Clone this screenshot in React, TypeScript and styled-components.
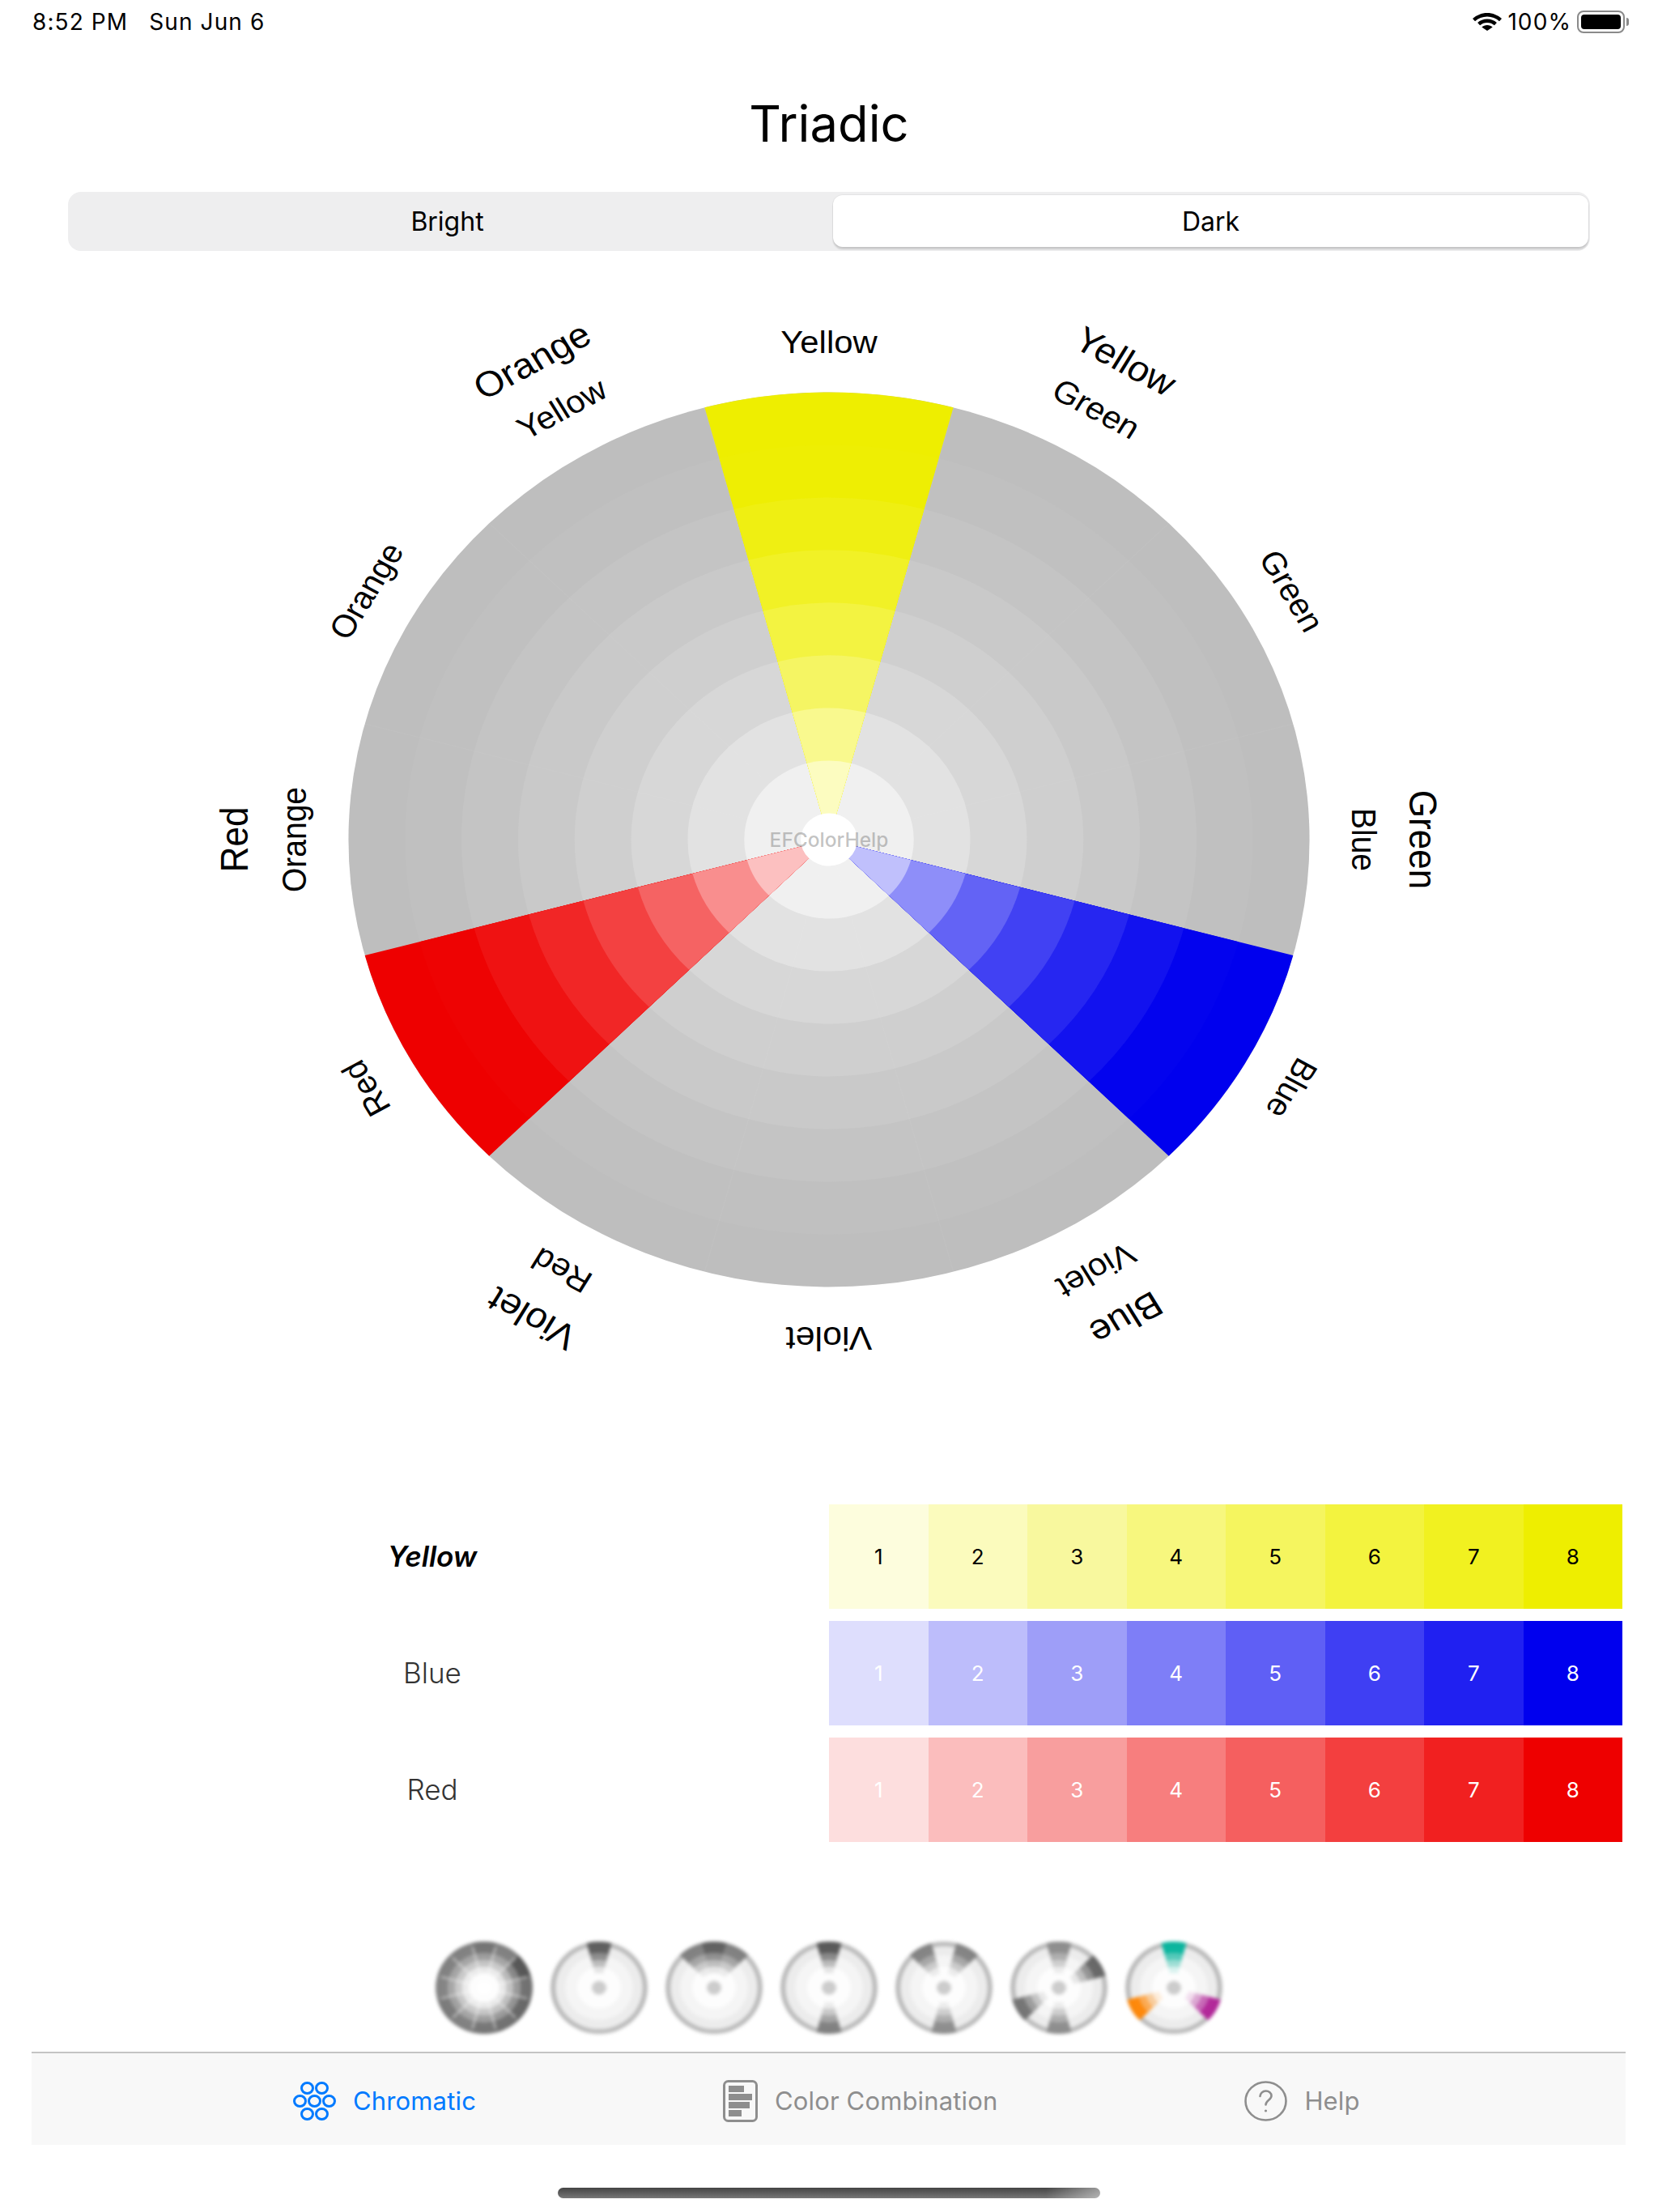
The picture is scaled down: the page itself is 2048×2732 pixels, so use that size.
import React from "react";
import styled, { createGlobalStyle } from "styled-components";

const SX = 1.0743;
const RING_STEP = 65;
const HOLE = 32.5;

const GRAYS = ["#f0f0f0", "#e2e2e2", "#d7d7d7", "#cfcfcf", "#c9c9c9", "#c4c4c4", "#c0c0c0", "#bebebe"];
// how much white is left in a wedge, ring by ring from the middle
const TINTS = [192, 142, 99, 65, 38, 18, 3, 0];
const HIGH = [252, 249, 245, 243, 241, 239, 238, 238];

const wedgeColor = (hue: string, i: number) => {
  const t = TINTS[i];
  const h = HIGH[i];
  if (hue === "yellow") return `rgb(${h},${h},${t})`;
  if (hue === "blue") return `rgb(${t},${t},${h})`;
  return `rgb(${h},${t},${t})`;
};

const point = (r: number, deg: number) => {
  const a = (deg * Math.PI) / 180;
  return `${(r * Math.sin(a)).toFixed(2)} ${(-r * Math.cos(a)).toFixed(2)}`;
};

const pie = (r: number, deg: number, half = 15) =>
  `M0 0L${point(r, deg - half)}A${r} ${r} 0 0 1 ${point(r, deg + half)}Z`;

const band = (ri: number, ro: number, deg: number, half = 15) =>
  `M${point(ro, deg - half)}A${ro} ${ro} 0 0 1 ${point(ro, deg + half)}L${point(ri, deg + half)}A${ri} ${ri} 0 0 0 ${point(ri, deg - half)}Z`;

const SEAM_ANGLES = [15, 45, 75, 105, 135, 165, 195, 225, 255, 285, 315, 345];

const WHEEL_LABELS = [
  { text: "Yellow", deg: 0, r: 601, size: 39 },
  { text: "Yellow", deg: 30, r: 667, size: 44 },
  { text: "Green", deg: 30, r: 601, size: 39 },
  { text: "Green", deg: 60, r: 601, size: 39 },
  { text: "Green", deg: 90, r: 667, size: 44 },
  { text: "Blue", deg: 90, r: 601, size: 39 },
  { text: "Blue", deg: 120, r: 601, size: 39 },
  { text: "Blue", deg: 150, r: 668, size: 44 },
  { text: "Violet", deg: 150, r: 601, size: 39 },
  { text: "Violet", deg: 180, r: 602, size: 40 },
  { text: "Violet", deg: 210, r: 668, size: 44 },
  { text: "Red", deg: 210, r: 601, size: 39 },
  { text: "Red", deg: 240, r: 601, size: 39 },
  { text: "Red", deg: 270, r: 668, size: 44 },
  { text: "Orange", deg: 270, r: 601, size: 39 },
  { text: "Orange", deg: 300, r: 601, size: 39 },
  { text: "Orange", deg: 330, r: 668, size: 44 },
  { text: "Yellow", deg: 330, r: 601, size: 39 },
];

const ROWS = [
  { name: "Yellow", active: true, colors: ["#fdfddd", "#fbfbbd", "#f8f89e", "#f7f77e", "#f5f55f", "#f3f33f", "#f1f120", "#eeee00"] },
  { name: "Blue", active: false, colors: ["#dedefd", "#bdbdfb", "#9e9ef8", "#7e7ef7", "#5f5ff5", "#3f3ff3", "#2020f1", "#0000ee"] },
  { name: "Red", active: false, colors: ["#fddede", "#fbbdbd", "#f89e9e", "#f77e7e", "#f55f5f", "#f33f3f", "#f12020", "#ee0000"] },
];

type MiniWedge = { deg: number; color: string };

const FULL_SHADES = ["#707070", "#7c7c7c", "#505050", "#6c6c6c", "#626262", "#6c6c6c", "#727272", "#7c7c7c", "#767676", "#808080", "#7c7c7c", "#7c7c7c"];

const MINI_WHEELS: MiniWedge[][] = [
  FULL_SHADES.map((color, i) => ({ deg: i * 30, color })),
  [{ deg: 0, color: "#585858" }],
  [
    { deg: -30, color: "#7c7c7c" },
    { deg: 0, color: "#5c5c5c" },
    { deg: 30, color: "#7c7c7c" },
  ],
  [
    { deg: 0, color: "#525252" },
    { deg: 180, color: "#7c7c7c" },
  ],
  [
    { deg: -30, color: "#808080" },
    { deg: 30, color: "#808080" },
    { deg: 180, color: "#8a8a8a" },
  ],
  [
    { deg: 0, color: "#8a8a8a" },
    { deg: 60, color: "#626262" },
    { deg: 180, color: "#8a8a8a" },
    { deg: 240, color: "#707070" },
  ],
  [
    { deg: 0, color: "#00b39b" },
    { deg: 120, color: "#b01f96" },
    { deg: 240, color: "#ff8400" },
  ],
];

const MINI_TIERS = [
  { ri: 0.32, ro: 0.46, alpha: 0.14 },
  { ri: 0.46, ro: 0.6, alpha: 0.36 },
  { ri: 0.6, ro: 0.75, alpha: 0.66 },
  { ri: 0.75, ro: 1, alpha: 0.95 },
];

const MiniWheel: React.FC<{ wedges: MiniWedge[] }> = ({ wedges }) => {
  const R = 57;
  const full = wedges.length > 6;
  return (
    <MiniSvg viewBox="-60 -57 120 114">
      <g transform="scale(1.05 1)">
        <circle r={R} fill="#bababa" />
        <circle r={R * 0.9} fill="#ececec" />
        <circle r={R * 0.7} fill="#f5f5f5" />
        <circle r={R * 0.45} fill="#fdfdfd" />
        {wedges.map((w) =>
          MINI_TIERS.map((t) => (
            <path
              key={`${w.deg}-${t.ri}`}
              d={band(R * t.ri, R * t.ro, w.deg)}
              fill={w.color}
              fillOpacity={t.alpha}
            />
          )),
        )}
        {full &&
          SEAM_ANGLES.map((deg) => (
            <path
              key={deg}
              d={`M${point(R * 0.3, deg)}L${point(R * 0.92, deg)}`}
              stroke="#fff"
              strokeOpacity={0.5}
              strokeWidth={2}
            />
          ))}
        <circle r={R * 0.15} fill={full ? "#ffffff" : "#cccccc"} />
      </g>
    </MiniSvg>
  );
};

const ColorWheel: React.FC = () => {
  const rings = [7, 6, 5, 4, 3, 2, 1, 0];
  const radius = (i: number) => HOLE + RING_STEP * (i + 1);
  const outer = radius(7);
  return (
    <WheelSvg viewBox="0 0 1568 1330">
      <g transform={`translate(784 667) scale(${SX} 1)`}>
        {rings.map((i) => (
          <circle key={i} r={radius(i)} fill={GRAYS[i]} />
        ))}
        {SEAM_ANGLES.map((deg) => (
          <path key={deg} d={`M${point(HOLE, deg)}L${point(outer, deg)}`} stroke="#fff" strokeOpacity={0.035} strokeWidth={1.5} />
        ))}
        {["yellow", "blue", "red"].map((hue, n) =>
          rings.map((i) => <path key={`${hue}${i}`} d={pie(radius(i), n * 120)} fill={wedgeColor(hue, i)} />),
        )}
        <circle r={HOLE} fill="#ffffff" />
        {WHEEL_LABELS.map((l) => (
          <WheelLabel key={`${l.text}${l.deg}`} transform={`rotate(${l.deg}) translate(0 ${-l.r})`} fontSize={l.size}>
            {l.text}
          </WheelLabel>
        ))}
      </g>
      <Watermark x={784} y={676}>
        EFColorHelp
      </Watermark>
    </WheelSvg>
  );
};

const ChromaticIcon = () => (
  <svg width="53" height="48" viewBox="0 0 53 48" fill="none" stroke="#007aff" strokeWidth="3">
    {[
      [17.5, 8],
      [35.5, 8],
      [8.5, 24],
      [26.5, 24],
      [44.5, 24],
      [17.5, 40],
      [35.5, 40],
    ].map(([x, y]) => (
      <ellipse key={`${x}-${y}`} cx={x} cy={y} rx="7" ry="6.4" />
    ))}
  </svg>
);

const CombinationIcon = () => (
  <svg width="43" height="52" viewBox="0 0 43 52" fill="#8e8e8e">
    <rect x="1.5" y="1.5" width="40" height="49" rx="5" fill="none" stroke="#8e8e8e" strokeWidth="3" />
    <rect x="7" y="7" width="19" height="8" />
    <rect x="7" y="17" width="29" height="8" />
    <rect x="7" y="27" width="26" height="8" />
    <rect x="7" y="37" width="16" height="8" />
  </svg>
);

const HelpIcon = () => (
  <svg width="53" height="50" viewBox="0 0 53 50" fill="none" stroke="#8e8e8e" strokeWidth="2.6" strokeLinecap="round">
    <ellipse cx="26.5" cy="25" rx="25" ry="23.5" />
    <path d="M19.5 19a7 7 0 0 1 7-6.5c4 0 7 2.8 7 6 0 5-7 5.5-7 11" />
    <circle cx="26.5" cy="37" r="1.6" fill="#8e8e8e" stroke="none" />
  </svg>
);

const WifiIcon = () => (
  <svg width="36" height="22" viewBox="0 0 36 22" fill="#000">
    <path d="M18 0C11 0 5 2.7 0 7l3 3.2C7 6.6 12.2 4.5 18 4.5s11 2.1 15 5.7L36 7C31 2.7 25 0 18 0z" />
    <path d="M18 7.6c-4.6 0-8.7 1.7-11.9 4.5l3 3.2c2.4-2.1 5.5-3.3 8.9-3.3s6.5 1.2 8.9 3.3l3-3.2C26.7 9.3 22.6 7.6 18 7.6z" />
    <path d="M18 15c-2.6 0-4.9 1-6.7 2.5L18 22l6.7-4.5C22.9 16 20.6 15 18 15z" />
  </svg>
);

const App: React.FC = () => (
  <Page>
    <GlobalStyle />
    <StatusBar>
      <StatusGroup>
        <StatusText>8:52 PM</StatusText>
        <StatusText>Sun Jun 6</StatusText>
      </StatusGroup>
      <StatusRight>
        <WifiIcon />
        <StatusText>100%</StatusText>
        <Battery>
          <BatteryFill />
        </Battery>
      </StatusRight>
    </StatusBar>

    <TitleBar>Triadic</TitleBar>

    <Segmented>
      <Segment>Bright</Segment>
      <Segment $selected>Dark</Segment>
    </Segmented>

    <WheelArea>
      <ColorWheel />
    </WheelArea>

    <Rows>
      {ROWS.map((row) => (
        <Row key={row.name}>
          <RowLabel $active={row.active}>{row.name}</RowLabel>
          <Swatches>
            {row.colors.map((c, i) => (
              <Swatch key={c} $dark={row.active} style={{ background: c }}>
                {i + 1}
              </Swatch>
            ))}
          </Swatches>
        </Row>
      ))}
    </Rows>

    <Schemes>
      {MINI_WHEELS.map((w, i) => (
        <MiniWheel key={i} wedges={w} />
      ))}
    </Schemes>

    <TabBar>
      <Tab $active>
        <ChromaticIcon />
        Chromatic
      </Tab>
      <Tab>
        <CombinationIcon />
        Color Combination
      </Tab>
      <Tab>
        <HelpIcon />
        Help
      </Tab>
    </TabBar>

    <HomeIndicator />
  </Page>
);

const GlobalStyle = createGlobalStyle`
  html, body {
    margin: 0;
    padding: 0;
    background: #ffffff;
  }
  * {
    box-sizing: border-box;
  }
`;

const Page = styled.div`
  width: 2048px;
  height: 2732px;
  display: flex;
  flex-direction: column;
  font-family: Inter, "Liberation Sans", sans-serif;
  color: #000;
  overflow: hidden;
`;

const StatusBar = styled.div`
  height: 54px;
  padding: 0 41px 0 40px;
  display: flex;
  align-items: center;
  justify-content: space-between;
`;

const StatusGroup = styled.div`
  display: flex;
  gap: 26px;
`;

const StatusRight = styled.div`
  display: flex;
  align-items: center;
  gap: 7px;
`;

const StatusText = styled.span`
  font-size: 28px;
  line-height: 32px;
  letter-spacing: 1.1px;
`;

const Battery = styled.div`
  position: relative;
  width: 59px;
  height: 28px;
  padding: 3px;
  border: 2px solid #8a8a8a;
  border-radius: 8px;
  &::after {
    content: "";
    position: absolute;
    right: -7px;
    top: 7px;
    width: 3px;
    height: 10px;
    border-radius: 0 3px 3px 0;
    background: #8a8a8a;
  }
`;

const BatteryFill = styled.div`
  height: 100%;
  background: #000;
  border-radius: 4px;
`;

const TitleBar = styled.div`
  height: 183px;
  padding-top: 14px;
  display: flex;
  align-items: center;
  justify-content: center;
  font-size: 61.5px;
`;

const Segmented = styled.div`
  height: 73px;
  margin: 0 84px 0 84px;
  padding: 4px 2px 5px 0;
  display: grid;
  grid-template-columns: 945px 1fr;
  background: #eeeeef;
  border-radius: 16px;
`;

const Segment = styled.div<{ $selected?: boolean }>`
  display: flex;
  align-items: center;
  justify-content: center;
  padding-right: ${(p) => (p.$selected ? "0" : "8px")};
  font-size: 32px;
  font-weight: 400;
  border-radius: 12px;
  background: ${(p) => (p.$selected ? "#ffffff" : "transparent")};
  box-shadow: ${(p) => (p.$selected ? "0 3px 2px rgba(0,0,0,0.14), 0 0 0 1px rgba(0,0,0,0.04)" : "none")};
`;

const WheelArea = styled.div`
  margin-top: 60px;
  display: flex;
  justify-content: center;
`;

const WheelSvg = styled.svg`
  width: 1568px;
  height: 1330px;
  display: block;
`;

const WheelLabel = styled.text`
  font-family: "Liberation Sans", Arial, sans-serif;
  text-anchor: middle;
  fill: #000;
`;

const Watermark = styled.text`
  font-family: Inter, sans-serif;
  font-size: 24.5px;
  font-weight: 500;
  text-anchor: middle;
  fill: rgba(120, 120, 120, 0.45);
`;

const Rows = styled.div`
  margin-top: 158px;
  padding: 0 44px;
  display: flex;
  flex-direction: column;
  gap: 15px;
`;

const Row = styled.div`
  height: 129px;
  display: flex;
  align-items: center;
`;

const RowLabel = styled.div<{ $active: boolean }>`
  width: 980px;
  padding-bottom: 2px;
  text-align: center;
  font-size: 35px;
  font-style: ${(p) => (p.$active ? "italic" : "normal")};
  font-weight: ${(p) => (p.$active ? 600 : 300)};
  color: ${(p) => (p.$active ? "#000" : "#333")};
`;

const Swatches = styled.div`
  width: 980px;
  height: 100%;
  display: grid;
  grid-template-columns: repeat(8, 1fr);
`;

const Swatch = styled.div<{ $dark: boolean }>`
  display: flex;
  align-items: center;
  justify-content: center;
  font-size: 26px;
  color: ${(p) => (p.$dark ? "#000" : "#fff")};
`;

const Schemes = styled.div`
  margin-top: 123px;
  display: flex;
  justify-content: center;
  gap: 22px;
`;

const MiniSvg = styled.svg`
  width: 120px;
  height: 114px;
  display: block;
  filter: blur(2px);
`;

const TabBar = styled.div`
  margin: 22px 40px 0 39px;
  height: 115px;
  padding: 4px 0 0 323px;
  display: flex;
  align-items: center;
  gap: 305px;
  background: #f8f8f8;
  border-top: 2px solid #c4c4c4;
`;

const Tab = styled.div<{ $active?: boolean }>`
  display: flex;
  align-items: center;
  gap: 21px;
  font-size: 31px;
  letter-spacing: 0.15px;
  color: ${(p) => (p.$active ? "#007aff" : "#8e8e8e")};
`;

const HomeIndicator = styled.div`
  margin: 53px auto 0;
  width: 670px;
  height: 13px;
  border-radius: 7px;
  background: linear-gradient(to right, rgba(255, 255, 255, 0) 90%, rgba(255, 255, 255, 0.45) 100%),
    linear-gradient(to bottom, #444, #777);
`;

export default App;
